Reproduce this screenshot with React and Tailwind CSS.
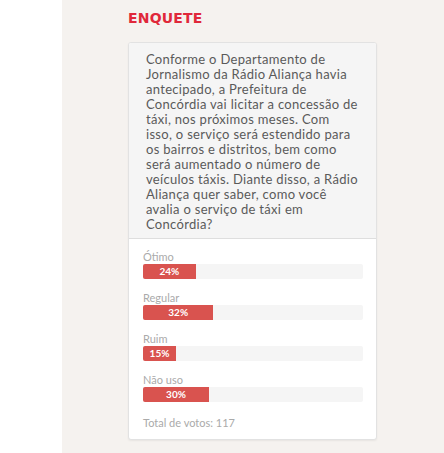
const options = [
  { label: 'Ótimo', pct: 24 },
  { label: 'Regular', pct: 32 },
  { label: 'Ruim', pct: 15 },
  { label: 'Não uso', pct: 30 },
]

const question = [
  'Conforme o Departamento de',
  'Jornalismo da Rádio Aliança havia',
  'antecipado, a Prefeitura de',
  'Concórdia vai licitar a concessão de',
  'táxi, nos próximos meses. Com',
  'isso, o serviço será estendido para',
  'os bairros e distritos, bem como',
  'será aumentado o número de',
  'veículos táxis. Diante disso, a Rádio',
  'Aliança quer saber, como você',
  'avalia o serviço de táxi em',
  'Concórdia?',
]

function App() {
  return (
    <div className="flex h-[453px] w-[444px] bg-white" style={{ fontFamily: 'Lato, sans-serif' }}>
      <div className="w-[62px] shrink-0 bg-white" />
      <div className="flex-1 bg-[#f5f2ef] pl-[66px] pt-[10px]">
        <h2 className="mb-[15px] text-[14px] font-bold leading-[17px] tracking-[0.2px] text-[#e0283a]" style={{ fontFamily: '"DejaVu Sans", sans-serif' }}>
          ENQUETE
        </h2>
        <div className="w-[249px] overflow-hidden rounded-[3px] border border-[#e2e2e2] bg-white shadow-[0_1px_2px_rgba(0,0,0,0.06)]">
          <div className="border-b border-[#dedede] bg-[#f5f5f5] pb-[6px] pl-[17px] pr-[10px] pt-[9px] text-[13px] leading-[15px] tracking-[0.3px] text-[#5a5a5a]">
            {question.map((line) => (
              <span key={line} className="block whitespace-nowrap">{line}</span>
            ))}
          </div>
          <div className="px-[14px] pb-[10px] pt-[12px]">
            {options.map((o) => (
              <div key={o.label} className="mb-[13px]">
                <div className="mb-[1px] text-[11px] leading-[12px] text-[#aaa]">{o.label}</div>
                <div className="h-[15px] w-[220px] overflow-hidden rounded-[2px] bg-[#f5f5f5]">
                  <div
                    className="flex h-full items-center justify-center bg-[#d9534f] text-[10px] font-bold text-white"
                    style={{ width: `${o.pct}%` }}
                  >
                    {o.pct}%
                  </div>
                </div>
              </div>
            ))}
            <div className="pt-[2px] text-[11px] leading-[12px] text-[#aaa]">Total de votos: 117</div>
          </div>
        </div>
      </div>
    </div>
  )
}

export default App
